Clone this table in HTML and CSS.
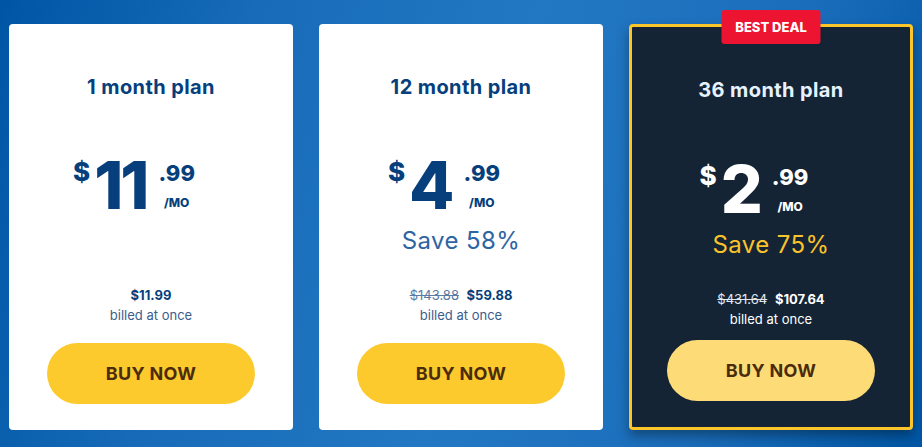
FILE: index.html
```html
<!DOCTYPE html>
<html lang="en">
<head>
    <meta charset="UTF-8">
    <meta name="viewport" content="width=device-width, initial-scale=1.0">
    <title>Pricing plans</title>
    <link rel="stylesheet" href="styles.css">
</head>
<body>
    <main class="plans">
        <div class="plan">
            <h2 class="plan-title">1 month plan</h2>
            <div class="price">
                <span class="cur">$</span>
                <span class="whole">11</span>
                <span class="tail">
                    <span class="cents">.99</span>
                    <span class="per">/MO</span>
                </span>
            </div>
            <p class="save"></p>
            <div class="billing">
                <p class="total"><b>$11.99</b></p>
                <p class="note">billed at once</p>
            </div>
            <button class="buy">BUY NOW</button>
        </div>

        <div class="plan">
            <h2 class="plan-title">12 month plan</h2>
            <div class="price">
                <span class="cur">$</span>
                <span class="whole">4</span>
                <span class="tail">
                    <span class="cents">.99</span>
                    <span class="per">/MO</span>
                </span>
            </div>
            <p class="save">Save 58%</p>
            <div class="billing">
                <p class="total"><s>$143.88</s> <b>$59.88</b></p>
                <p class="note">billed at once</p>
            </div>
            <button class="buy">BUY NOW</button>
        </div>

        <div class="plan featured">
            <span class="badge">BEST DEAL</span>
            <h2 class="plan-title">36 month plan</h2>
            <div class="price">
                <span class="cur">$</span>
                <span class="whole">2</span>
                <span class="tail">
                    <span class="cents">.99</span>
                    <span class="per">/MO</span>
                </span>
            </div>
            <p class="save">Save 75%</p>
            <div class="billing">
                <p class="total"><s>$431.64</s> <b>$107.64</b></p>
                <p class="note">billed at once</p>
            </div>
            <button class="buy">BUY NOW</button>
        </div>
    </main>
</body>
</html>
```

FILE: styles.css
```css
html, body{
    margin: 0;
    padding: 0;
    height: 100%;
}
body{
    font-family: Inter, "Open Sans", sans-serif;
    background: linear-gradient(105deg, #0056a5 0%, #176bb8 25%, #2378c3 52%, #1a6dba 78%, #0056a5 100%);
}
.plans{
    display: flex;
    gap: 26px;
    padding: 24px 9px 0;
}
.plan{
    position: relative;
    flex: none;
    width: 284px;
    box-sizing: border-box;
    height: 406px;
    display: flex;
    flex-direction: column;
    align-items: center;
    padding: 51px 0 26px;
    background: #fff;
    border-radius: 4px;
    color: #063f7c;
}
.plan-title{
    margin: 0;
    font-size: 20px;
    line-height: 24px;
    font-weight: 700;
    letter-spacing: 0.4px;
}
.price{
    display: flex;
    align-items: flex-start;
    margin-top: 53px;
    padding-right: 34px;
    height: 66px;
    font-weight: 800;
}
.cur{
    margin-top: 7px;
    margin-right: 4px;
    font-size: 26px;
    line-height: 25px;
}
.whole{
    font-size: 66px;
    line-height: 66px;
    letter-spacing: -3px;
}
.tail{
    display: flex;
    flex-direction: column;
    align-items: center;
    margin-left: 12px;
    margin-top: 10px;
}
.cents{
    font-size: 22px;
    line-height: 22px;
}
.per{
    margin-top: 13px;
    font-size: 12px;
    line-height: 12px;
}
.save{
    margin: 8px 0 0;
    height: 30px;
    font-size: 24px;
    line-height: 30px;
    letter-spacing: 0.4px;
    color: #2d64a4;
}
.billing{
    margin-top: 29px;
    text-align: center;
    font-size: 13px;
    line-height: 20px;
}
.billing p{
    margin: 0;
}
.total s{
    margin-right: 4px;
    color: #5a7ba4;
}
.note{
    color: #3b5e8d;
}
.buy{
    margin-top: auto;
    width: 208px;
    height: 61px;
    border: 0;
    border-radius: 31px;
    background: #fdca2d;
    color: #4a2c0c;
    font-family: inherit;
    font-size: 18px;
    font-weight: 700;
    letter-spacing: 0.3px;
}

.featured{
    border: 3px solid #fcc62b;
    background: #152434;
    color: #fff;
    box-shadow: 0 6px 12px rgba(0,0,0,0.35);
}
.featured .plan-title{
    color: #e6f2ff;
}
.featured .price{
    margin-top: 54px;
}
.featured .save{
    color: #f9c32b;
}
.featured .total s{
    color: #e2e8ef;
}
.featured .note{
    color: #fff;
}
.featured .buy{
    background: #fddc78;
}
.badge{
    position: absolute;
    top: -17px;
    left: 50%;
    transform: translateX(-50%);
    width: 99px;
    height: 34px;
    border-radius: 3px;
    background: #ec1430;
    color: #fff;
    font-size: 13px;
    font-weight: 800;
    line-height: 34px;
    text-align: center;
}
```
